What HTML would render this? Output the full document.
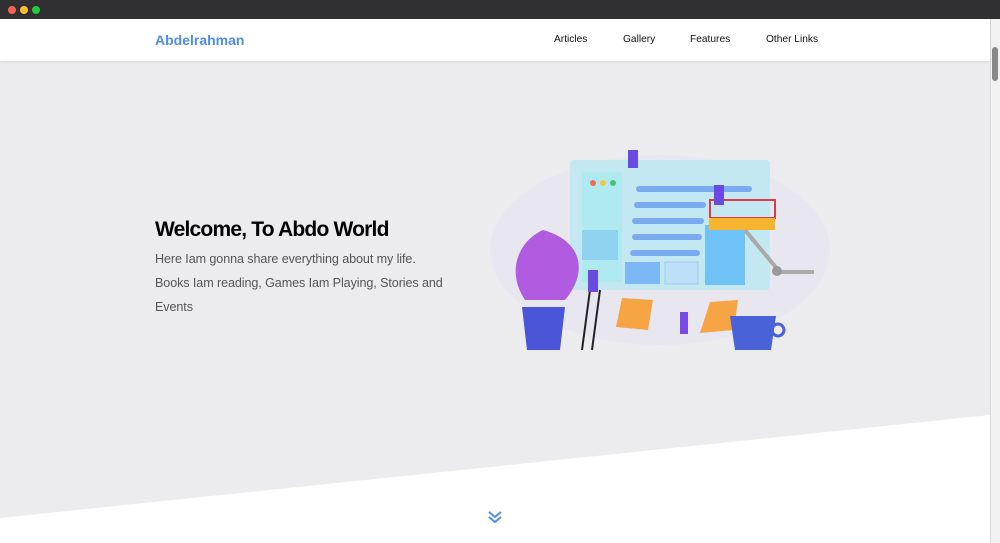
<!DOCTYPE html>
<html><head><style>
*{margin:0;padding:0;box-sizing:border-box}
body{width:1000px;height:543px;overflow:hidden;font-family:"Liberation Sans",sans-serif;background:#fff;position:relative}
.tb{position:absolute;left:0;top:0;width:1000px;height:19px;background:#303033}
.dot{position:absolute;top:6px;width:8px;height:8px;border-radius:50%}
.nav{position:absolute;top:19px;left:0;width:990px;height:42px;background:#fff;box-shadow:0 1px 3px rgba(0,0,0,.08);z-index:2}
.logo{position:absolute;left:155px;top:13px;color:#4d8ee8;font-weight:bold;font-size:14px}
.nav a{position:absolute;top:15px;font-size:10.2px;color:#111;text-decoration:none}
.hero{position:absolute;top:61px;left:0;width:990px;height:482px;background:#ecebee}
h1{position:absolute;left:155px;top:218px;font-size:21px;font-weight:bold;color:#000;letter-spacing:-0.8px}
p{position:absolute;left:155px;top:247px;width:330px;font-size:12.6px;line-height:24px;color:#555;letter-spacing:-0.1px;white-space:nowrap}
.sb{position:absolute;right:0;top:19px;width:10px;height:524px;background:#f2f2f2;border-left:1px solid #ddd}
.th{position:absolute;right:2px;top:28px;width:6px;height:34px;background:#888;border-radius:3px}
</style></head><body>
<div class="tb"><div class="dot" style="left:8px;background:#fe5f57"></div><div class="dot" style="left:20px;background:#febc2e"></div><div class="dot" style="left:32px;background:#28c840"></div></div>
<div class="hero"></div>
<svg style="position:absolute;left:0;top:0" width="1000" height="543"><polygon points="0,518 990,415 990,543 0,543" fill="#fff"/>
<g>
<ellipse cx="660" cy="250" rx="170" ry="95" fill="#e8e7ef"/>
<rect x="570" y="160" width="200" height="130" rx="4" fill="#bfe8f2" opacity=".9"/>
<rect x="582" y="172" width="40" height="110" fill="#aeeaef"/>
<circle cx="593" cy="183" r="3" fill="#f06b5b"/><circle cx="603" cy="183" r="3" fill="#f5c440"/><circle cx="613" cy="183" r="3" fill="#45c37a"/>
<rect x="636" y="186" width="116" height="6" rx="3" fill="#7aaaf0"/>
<rect x="634" y="202" width="72" height="6" rx="3" fill="#7aaaf0"/>
<rect x="632" y="218" width="72" height="6" rx="3" fill="#7aaaf0"/>
<rect x="632" y="234" width="70" height="6" rx="3" fill="#7aaaf0"/>
<rect x="630" y="250" width="70" height="6" rx="3" fill="#7aaaf0"/>
<rect x="582" y="230" width="36" height="30" fill="#8fd3f0"/>
<rect x="625" y="262" width="35" height="22" fill="#7bb8f5"/>
<rect x="665" y="262" width="33" height="22" fill="#bde0f8" stroke="#9fcaf0"/>
<rect x="705" y="225" width="40" height="60" fill="#6ec2f5"/>
<rect x="710" y="200" width="65" height="18" fill="none" stroke="#d83b4a" stroke-width="2"/>
<rect x="709" y="218" width="66" height="12" fill="#f5b52e"/>
<line x1="745" y1="230" x2="778" y2="270" stroke="#aaa" stroke-width="4"/><line x1="778" y1="272" x2="814" y2="272" stroke="#aaa" stroke-width="4"/>
<circle cx="777" cy="271" r="5" fill="#999"/>
<path d="M543 230 C520 240 505 270 525 300 L565 300 C590 270 580 240 543 230Z" fill="#b05be0"/>
<path d="M522 307 L565 307 L560 350 L527 350Z" fill="#4a55d8"/>
<line x1="590" y1="290" x2="582" y2="350" stroke="#222" stroke-width="2"/><line x1="600" y1="290" x2="592" y2="350" stroke="#222" stroke-width="2"/>
<rect x="588" y="270" width="10" height="22" fill="#6a4ae0"/>
<polygon points="622,298 653,300 648,330 616,327" fill="#f7a445"/>
<polygon points="710,302 738,300 734,330 700,333" fill="#f7a445"/>
<rect x="680" y="312" width="8" height="22" fill="#7a4ae8"/>
<rect x="628" y="150" width="10" height="18" fill="#6a4ae0"/>
<rect x="714" y="185" width="10" height="20" fill="#6a4ae0"/>
<path d="M730 316 L776 316 L771 350 L735 350Z" fill="#4a62d8"/><circle cx="778" cy="330" r="6" fill="none" stroke="#4a62d8" stroke-width="3"/>
</g>
<path d="M489 512 l6 5 l6 -5 M489 517 l6 5 l6 -5" stroke="#4d8ee8" stroke-width="2" fill="none"/>
</svg>
<div class="nav"><div class="logo">Abdelrahman</div>
<a style="left:554px">Articles</a><a style="left:623px">Gallery</a><a style="left:690px">Features</a><a style="left:766px">Other Links</a></div>
<h1>Welcome, To Abdo World</h1>
<p>Here Iam gonna share everything about my life.<br>Books Iam reading, Games Iam Playing, Stories and<br>Events</p>
<div class="sb"><div class="th"></div></div>
</body></html>
